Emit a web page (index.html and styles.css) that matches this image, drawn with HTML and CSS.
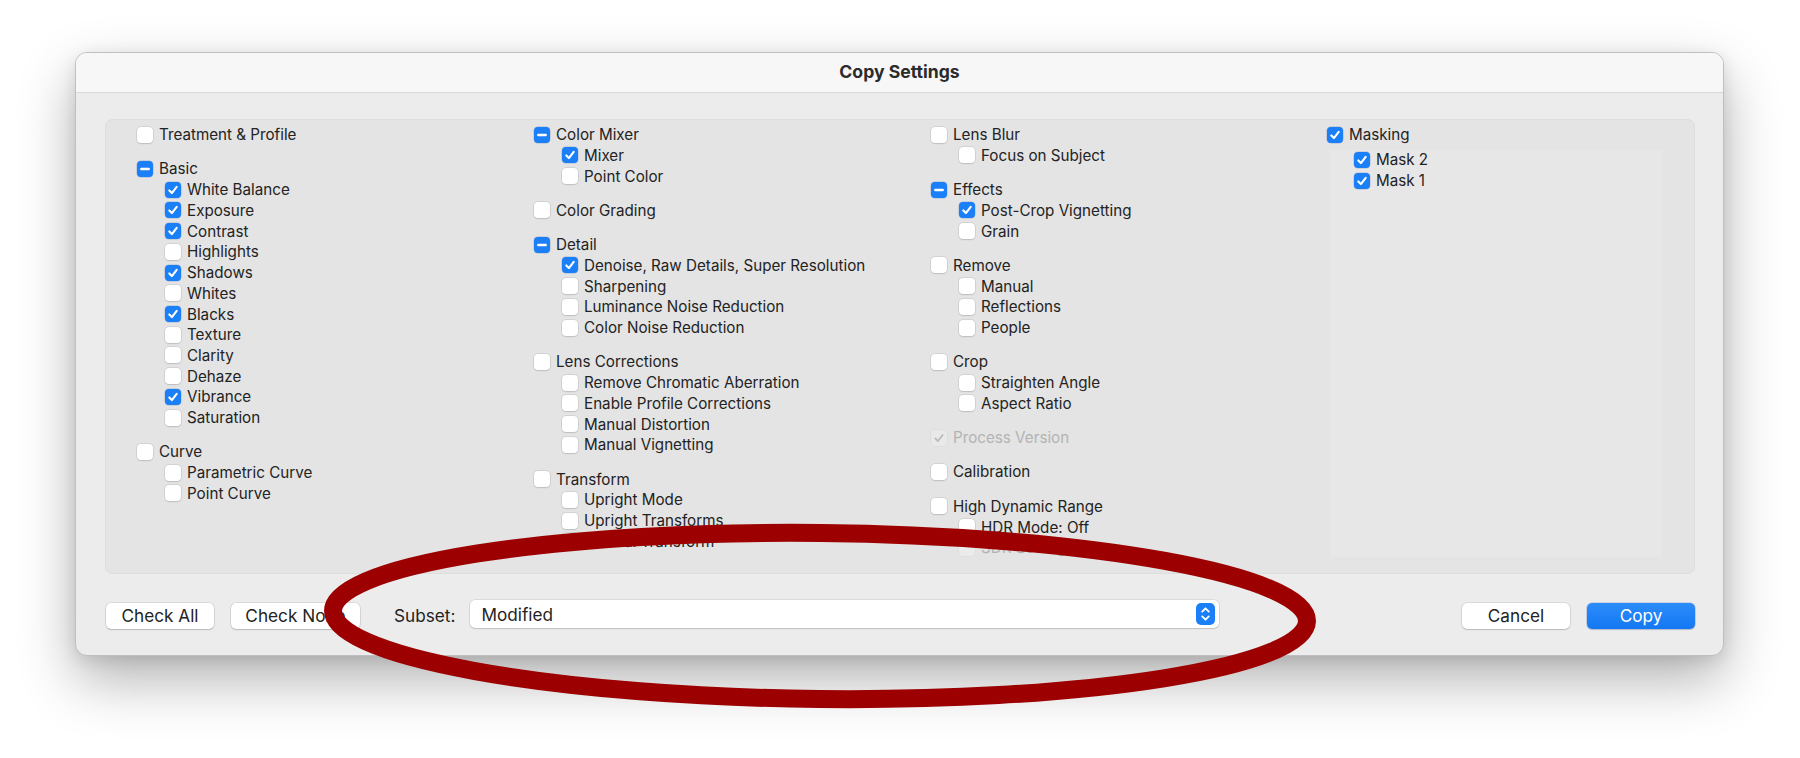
FILE: index.html
```html
<!DOCTYPE html>
<html>
<head>
<meta charset="utf-8">
<link rel="stylesheet" href="styles.css">
</head>
<body>
<div class="stage">
  <div class="window">
    <div class="titlebar">Copy Settings</div>
    <div class="body">
      <div class="panel">
        <div class="col">
          <div class="group">
            <div class="item"><span class="cb"></span><span>Treatment &amp; Profile</span></div>
          </div>
          <div class="group">
            <div class="item"><span class="cb mixed"><svg viewBox="0 0 16 16"><path d="M4.3 8h7.4"/></svg></span><span>Basic</span></div>
            <div class="item sub"><span class="cb on"><svg viewBox="0 0 16 16"><path d="M4.3 8.4l2.6 2.7 4.8-6.2"/></svg></span><span>White Balance</span></div>
            <div class="item sub"><span class="cb on"><svg viewBox="0 0 16 16"><path d="M4.3 8.4l2.6 2.7 4.8-6.2"/></svg></span><span>Exposure</span></div>
            <div class="item sub"><span class="cb on"><svg viewBox="0 0 16 16"><path d="M4.3 8.4l2.6 2.7 4.8-6.2"/></svg></span><span>Contrast</span></div>
            <div class="item sub"><span class="cb"></span><span>Highlights</span></div>
            <div class="item sub"><span class="cb on"><svg viewBox="0 0 16 16"><path d="M4.3 8.4l2.6 2.7 4.8-6.2"/></svg></span><span>Shadows</span></div>
            <div class="item sub"><span class="cb"></span><span>Whites</span></div>
            <div class="item sub"><span class="cb on"><svg viewBox="0 0 16 16"><path d="M4.3 8.4l2.6 2.7 4.8-6.2"/></svg></span><span>Blacks</span></div>
            <div class="item sub"><span class="cb"></span><span>Texture</span></div>
            <div class="item sub"><span class="cb"></span><span>Clarity</span></div>
            <div class="item sub"><span class="cb"></span><span>Dehaze</span></div>
            <div class="item sub"><span class="cb on"><svg viewBox="0 0 16 16"><path d="M4.3 8.4l2.6 2.7 4.8-6.2"/></svg></span><span>Vibrance</span></div>
            <div class="item sub"><span class="cb"></span><span>Saturation</span></div>
          </div>
          <div class="group">
            <div class="item"><span class="cb"></span><span>Curve</span></div>
            <div class="item sub"><span class="cb"></span><span>Parametric Curve</span></div>
            <div class="item sub"><span class="cb"></span><span>Point Curve</span></div>
          </div>
        </div>

        <div class="col">
          <div class="group">
            <div class="item"><span class="cb mixed"><svg viewBox="0 0 16 16"><path d="M4.3 8h7.4"/></svg></span><span>Color Mixer</span></div>
            <div class="item sub"><span class="cb on"><svg viewBox="0 0 16 16"><path d="M4.3 8.4l2.6 2.7 4.8-6.2"/></svg></span><span>Mixer</span></div>
            <div class="item sub"><span class="cb"></span><span>Point Color</span></div>
          </div>
          <div class="group">
            <div class="item"><span class="cb"></span><span>Color Grading</span></div>
          </div>
          <div class="group">
            <div class="item"><span class="cb mixed"><svg viewBox="0 0 16 16"><path d="M4.3 8h7.4"/></svg></span><span>Detail</span></div>
            <div class="item sub"><span class="cb on"><svg viewBox="0 0 16 16"><path d="M4.3 8.4l2.6 2.7 4.8-6.2"/></svg></span><span>Denoise, Raw Details, Super Resolution</span></div>
            <div class="item sub"><span class="cb"></span><span>Sharpening</span></div>
            <div class="item sub"><span class="cb"></span><span>Luminance Noise Reduction</span></div>
            <div class="item sub"><span class="cb"></span><span>Color Noise Reduction</span></div>
          </div>
          <div class="group">
            <div class="item"><span class="cb"></span><span>Lens Corrections</span></div>
            <div class="item sub"><span class="cb"></span><span>Remove Chromatic Aberration</span></div>
            <div class="item sub"><span class="cb"></span><span>Enable Profile Corrections</span></div>
            <div class="item sub"><span class="cb"></span><span>Manual Distortion</span></div>
            <div class="item sub"><span class="cb"></span><span>Manual Vignetting</span></div>
          </div>
          <div class="group">
            <div class="item"><span class="cb"></span><span>Transform</span></div>
            <div class="item sub"><span class="cb"></span><span>Upright Mode</span></div>
            <div class="item sub"><span class="cb"></span><span>Upright Transforms</span></div>
            <div class="item sub"><span class="cb"></span><span>Manual Transform</span></div>
          </div>
        </div>

        <div class="col">
          <div class="group">
            <div class="item"><span class="cb"></span><span>Lens Blur</span></div>
            <div class="item sub"><span class="cb"></span><span>Focus on Subject</span></div>
          </div>
          <div class="group">
            <div class="item"><span class="cb mixed"><svg viewBox="0 0 16 16"><path d="M4.3 8h7.4"/></svg></span><span>Effects</span></div>
            <div class="item sub"><span class="cb on"><svg viewBox="0 0 16 16"><path d="M4.3 8.4l2.6 2.7 4.8-6.2"/></svg></span><span>Post-Crop Vignetting</span></div>
            <div class="item sub"><span class="cb"></span><span>Grain</span></div>
          </div>
          <div class="group">
            <div class="item"><span class="cb"></span><span>Remove</span></div>
            <div class="item sub"><span class="cb"></span><span>Manual</span></div>
            <div class="item sub"><span class="cb"></span><span>Reflections</span></div>
            <div class="item sub"><span class="cb"></span><span>People</span></div>
          </div>
          <div class="group">
            <div class="item"><span class="cb"></span><span>Crop</span></div>
            <div class="item sub"><span class="cb"></span><span>Straighten Angle</span></div>
            <div class="item sub"><span class="cb"></span><span>Aspect Ratio</span></div>
          </div>
          <div class="group">
            <div class="item disabled"><span class="cb dis"><svg viewBox="0 0 16 16"><path d="M4.3 8.4l2.6 2.7 4.8-6.2"/></svg></span><span>Process Version</span></div>
          </div>
          <div class="group">
            <div class="item"><span class="cb"></span><span>Calibration</span></div>
          </div>
          <div class="group">
            <div class="item"><span class="cb"></span><span>High Dynamic Range</span></div>
            <div class="item sub"><span class="cb"></span><span>HDR Mode: Off</span></div>
            <div class="item sub disabled"><span class="cb faint"></span><span>SDR Settings</span></div>
          </div>
        </div>

        <div class="col last">
          <div class="group">
            <div class="item"><span class="cb on"><svg viewBox="0 0 16 16"><path d="M4.3 8.4l2.6 2.7 4.8-6.2"/></svg></span><span>Masking</span></div>
          </div>
          <div class="masklist">
            <div class="item sub"><span class="cb on"><svg viewBox="0 0 16 16"><path d="M4.3 8.4l2.6 2.7 4.8-6.2"/></svg></span><span>Mask 2</span></div>
            <div class="item sub"><span class="cb on"><svg viewBox="0 0 16 16"><path d="M4.3 8.4l2.6 2.7 4.8-6.2"/></svg></span><span>Mask 1</span></div>
          </div>
        </div>
      </div>

      <div class="footer">
        <button class="btn w108">Check All</button>
        <button class="btn w129">Check None</button>
        <span class="subset-label">Subset:</span>
        <div class="select">
          <span>Modified</span>
          <span class="stepper"><svg viewBox="0 0 19 22"><path d="M6.2 8.6l3.3-3.3 3.3 3.3M6.2 13.4l3.3 3.3 3.3-3.3"/></svg></span>
        </div>
        <span class="spacer"></span>
        <button class="btn w108">Cancel</button>
        <button class="btn primary w108">Copy</button>
      </div>
    </div>
  </div>
  <svg class="annot" viewBox="0 0 1800 758" width="1800" height="758">
    <ellipse cx="820" cy="616" rx="487" ry="83" transform="rotate(0.6 820 616)"/>
  </svg>
</div>
</body>
</html>
```

FILE: styles.css
```css
* { box-sizing: border-box; }
html, body {
  margin: 0;
  padding: 0;
  background: #ffffff;
}
body {
  width: 1800px;
  height: 758px;
  overflow: hidden;
  font-family: Inter, "Noto Sans", "Liberation Sans", sans-serif;
  font-size: 15.2px;
  color: #232323;
}
.stage {
  position: relative;
  width: 1800px;
  height: 758px;
  padding: 52px 0 0 75px;
}
.window {
  width: 1649px;
  height: 604px;
  border-radius: 12px;
  background: #ececec;
  border: 1px solid #bfbfbf;
  box-shadow: 0 24px 56px rgba(0, 0, 0, 0.30), 0 4px 16px rgba(0, 0, 0, 0.10);
  overflow: hidden;
  display: flex;
  flex-direction: column;
}
.titlebar {
  height: 40px;
  flex: none;
  background: #f7f7f7;
  border-bottom: 1px solid #d9d9d9;
  display: flex;
  align-items: center;
  justify-content: center;
  font-weight: 700;
  font-size: 17.6px;
  color: #2b2b2b;
  padding-bottom: 2px;
}
.body {
  flex: 1;
  padding: 26px 28px 0 29px;
  display: flex;
  flex-direction: column;
}
.panel {
  height: 455px;
  flex: none;
  background: #e4e4e4;
  border: 1px solid #dedede;
  border-radius: 7px;
  display: grid;
  grid-template-columns: 397px 397px 396px 1fr;
  padding: 4.3px 0 0 31px;
}
.col { display: flex; flex-direction: column; }
.group + .group { margin-top: 13.6px; }
.item {
  height: 20.72px;
  display: flex;
  align-items: center;
  gap: 6px;
  white-space: nowrap;
}
.item.sub { padding-left: 28px; }
.item.disabled { color: #b3b3b3; }
.cb {
  width: 16px;
  height: 16px;
  flex: none;
  border-radius: 4px;
  background: #ffffff;
  box-shadow: 0 0 0 0.6px rgba(0, 0, 0, 0.10), 0 0.5px 1.5px rgba(0, 0, 0, 0.12);
  display: flex;
  align-items: center;
  justify-content: center;
}
.cb svg { width: 16px; height: 16px; display: block; }
.cb svg path {
  fill: none;
  stroke: #ffffff;
  stroke-width: 2.1;
  stroke-linecap: round;
  stroke-linejoin: round;
}
.cb.on, .cb.mixed {
  background: #1b80f8;
  box-shadow: 0 0 0 0.5px rgba(0, 60, 160, 0.25);
}
.cb.mixed svg path { stroke-width: 2.4; }
.cb.dis {
  background: #e9e9e9;
  box-shadow: 0 0 0 0.6px rgba(0, 0, 0, 0.05);
}
.cb.dis svg path { stroke: #b9b9b9; stroke-width: 1.7; }
.cb.faint {
  background: #ebebeb;
  box-shadow: 0 0 0 0.6px rgba(0, 0, 0, 0.04);
}
.col.last { position: relative; }
.masklist {
  margin: 4.5px 32px 16px 3px;
  flex: 1;
  background: #e7e7e7;
  border-radius: 2px;
}
.masklist .item.sub { padding-left: 24px; }

.footer {
  flex: 1;
  display: flex;
  align-items: center;
  padding: 2px 0 0 1px;
  font-size: 17.2px;
}
.btn {
  height: 26px;
  border: none;
  border-radius: 5px;
  background: #ffffff;
  box-shadow: 0 0 0 0.5px rgba(0, 0, 0, 0.16), 0 1px 1.5px rgba(0, 0, 0, 0.14);
  font-family: inherit;
  font-size: 17.2px;
  color: #232323;
  padding: 0;
  margin-right: 17px;
}
.w108 { width: 108px; }
.w129 { width: 129px; }
.btn.primary {
  background: linear-gradient(#2c8cfb, #1478f2);
  color: #ffffff;
  margin-right: 0;
  box-shadow: 0 0 0 0.5px rgba(0, 70, 180, 0.3), 0 1px 1.5px rgba(0, 0, 0, 0.12);
}
.subset-label {
  margin-left: 17px;
  margin-right: 15px;
}
.select {
  width: 749px;
  height: 28px;
  margin-top: -3px;
  background: #ffffff;
  border-radius: 5px;
  box-shadow: 0 0 0 0.5px rgba(0, 0, 0, 0.14), 0 1px 1.5px rgba(0, 0, 0, 0.12);
  display: flex;
  align-items: center;
  justify-content: space-between;
  padding: 0 4px 0 11px;
}
.stepper {
  width: 19px;
  height: 22px;
  border-radius: 5px;
  background: #1b80f8;
  display: block;
}
.stepper svg { width: 19px; height: 22px; display: block; }
.stepper svg path {
  fill: none;
  stroke: #ffffff;
  stroke-width: 1.8;
  stroke-linecap: round;
  stroke-linejoin: round;
}
.spacer { flex: 1; }

.annot {
  position: absolute;
  left: 0;
  top: 0;
  pointer-events: none;
}
.annot ellipse {
  fill: none;
  stroke: #9c0000;
  stroke-width: 18;
}
```
